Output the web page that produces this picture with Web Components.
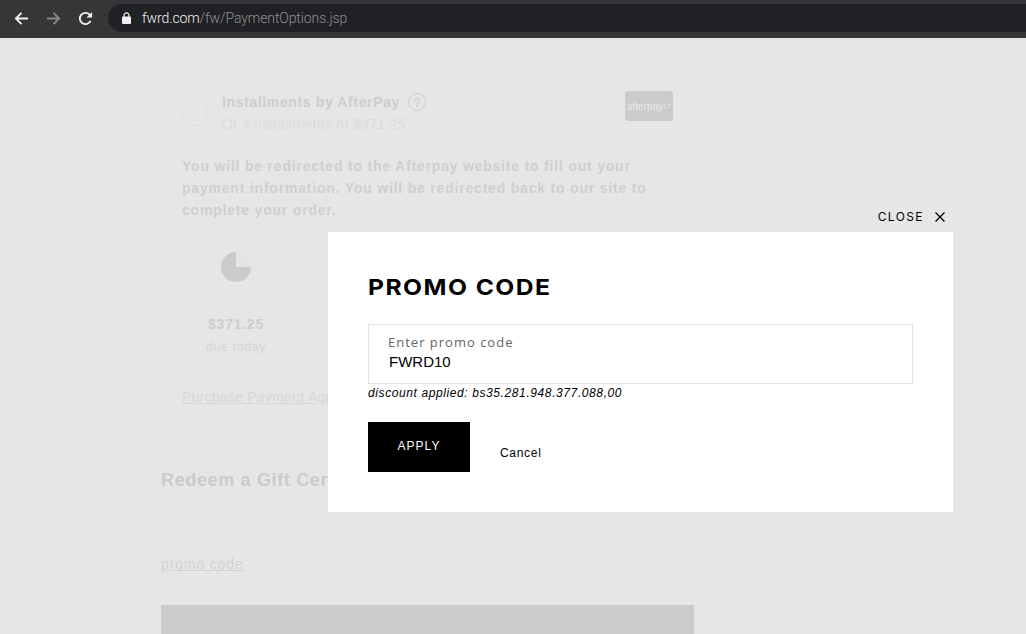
<!DOCTYPE html>
<html>
<head>
<meta charset="utf-8">
<title>Promo code</title>
<style>
  html, body { margin: 0; height: 100%; }
  body { width: 1026px; height: 634px; overflow: hidden; background: #e6e6e6; font-family: "Liberation Sans", Arial, sans-serif; }
</style>
</head>
<body>
<app-shell>
  <browser-bar slot="bar" host-name="fwrd.com" path="/fw/PaymentOptions.jsp"></browser-bar>
  <checkout-page slot="page"></checkout-page>
  <promo-dialog slot="dialog" value="FWRD10" message="discount applied: bs35.281.948.377.088,00"></promo-dialog>
</app-shell>

<script>
class AppShell extends HTMLElement {
  constructor() {
    super();
    this.attachShadow({ mode: 'open' });
  }

  connectedCallback() {
    this.shadowRoot.innerHTML = `
      <style>
        :host { display: flex; flex-direction: column; width: 1026px; height: 634px; position: relative; overflow: hidden; }
        .dialog-layer { position: absolute; left: 328px; top: 207px; }
      </style>
      <slot name="bar"></slot>
      <slot name="page"></slot>
      <div class="dialog-layer"><slot name="dialog"></slot></div>
    `;
  }
}

class BrowserBar extends HTMLElement {
  constructor() {
    super();
    this.attachShadow({ mode: 'open' });
  }

  connectedCallback() {
    this.shadowRoot.innerHTML = `
      <style>
        :host { display: flex; align-items: center; height: 38px; background: #353637; box-sizing: border-box; padding: 4px 0 6px 14px; flex: none; }
        svg { display: block; flex: none; }
        .nav { display: flex; gap: 17px; align-items: center; margin-right: 15px; }
        .url { flex: 1; height: 28px; background: #202124; border-radius: 14px 0 0 14px; display: flex; align-items: center; padding-left: 14px; font: 14px Roboto, "Liberation Sans", sans-serif; letter-spacing: -0.1px; }
        .lock { margin-right: 11px; }
        .host { color: #f1f1f1; font-weight: 300; }
        .path { color: #8f9194; font-weight: 300; }
      </style>
      <div class="nav">
        <svg width="15" height="15" viewBox="0 0 16 16" fill="none" stroke="#f1f1f1" stroke-width="2"><path d="M15 8H2M8 2 2 8l6 6"/></svg>
        <svg width="15" height="15" viewBox="0 0 16 16" fill="none" stroke="#85878a" stroke-width="2"><path d="M1 8h13M8 2l6 6-6 6"/></svg>
        <svg width="15" height="15" viewBox="0 0 16 16" fill="none" stroke="#f1f1f1" stroke-width="2"><path d="M13.4 10.5A6 6 0 1 1 12.3 3.8L14 5.5"/><path d="M15 1v6H9z" fill="#f1f1f1" stroke="none"/></svg>
      </div>
      <div class="url">
        <svg class="lock" width="9" height="12" viewBox="0 0 9 12"><path d="M2 5V3.4a2.5 2.5 0 0 1 5 0V5" fill="none" stroke="#f1f1f1" stroke-width="1.2"/><rect y="4.6" width="9" height="7.4" rx="1" fill="#f1f1f1"/></svg>
        <span class="host">${this.getAttribute('host-name')}</span><span class="path">${this.getAttribute('path')}</span>
      </div>
    `;
  }
}

class AfterpayOption extends HTMLElement {
  constructor() {
    super();
    this.attachShadow({ mode: 'open' });
  }

  connectedCallback() {
    this.shadowRoot.innerHTML = `
      <style>
        :host { display: flex; width: 491px; height: 46px; }
        .radio { width: 26px; height: 26px; box-sizing: border-box; border: 1px solid #dfdfdf; border-radius: 50%; margin: 9px 14px 0 0; flex: none; }
        .text { flex: 1; padding-top: 1px; }
        .title { display: flex; align-items: center; height: 20px; font-weight: 700; font-size: 14px; letter-spacing: 0.63px; color: #cdcdcd; }
        .help { width: 18px; height: 18px; box-sizing: border-box; border: 1.5px solid #cfcfcf; border-radius: 50%; margin-left: 8px; font-size: 13px; font-weight: 400; letter-spacing: 0; display: flex; align-items: center; justify-content: center; }
        .sub { margin-top: 2px; font-size: 14px; letter-spacing: 0.3px; color: #dcdcdc; line-height: 20px; }
        .logo { width: 48px; height: 30px; background: #cbcbcb; border-radius: 3px; display: flex; align-items: center; justify-content: center; color: #e8e8e8; font: 10px "Liberation Sans", sans-serif; flex: none; }
        svg { display: block; }
      </style>
      <div class="radio"></div>
      <div class="text">
        <div class="title">Installments by AfterPay<span class="help">?</span></div>
        <div class="sub">Or 4 installments of $371.25</div>
      </div>
      <div class="logo">afterpay<svg width="8" height="8" viewBox="0 0 9 8" fill="none" stroke="#e8e8e8"><path d="M1 4l3-3 1 1h2l1 2-3 3-1-1H2z"/></svg></div>
    `;
  }
}

class PaymentSchedule extends HTMLElement {
  constructor() {
    super();
    this.attachShadow({ mode: 'open' });
  }

  connectedCallback() {
    this.shadowRoot.innerHTML = `
      <style>
        :host { display: flex; flex-direction: column; align-items: center; width: 108px; color: #cdcdcd; }
        svg { display: block; }
        .amount { margin-top: 32px; font-weight: 700; font-size: 14px; line-height: 20px; letter-spacing: 0.75px; }
        .when { margin-top: 4px; font-size: 12px; line-height: 18px; letter-spacing: 0.8px; color: #d4d4d4; }
      </style>
      <svg width="30" height="30" viewBox="0 0 30 30"><circle cx="15" cy="15" r="15" fill="#e2e4e4"/><path d="M15 15V0A15 15 0 1 0 30 15z" fill="#cbcbcb"/></svg>
      <div class="amount">$371.25</div>
      <div class="when">due today</div>
    `;
  }
}

class CheckoutPage extends HTMLElement {
  constructor() {
    super();
    this.attachShadow({ mode: 'open' });
  }

  connectedCallback() {
    this.shadowRoot.innerHTML = `
      <style>
        :host { display: block; flex: 1; overflow: hidden; box-sizing: border-box; padding: 53px 0 0 161px; background: #e6e6e6; }
        .option { padding-left: 21px; }
        p { margin: 18px 0 0; width: 480px; font-weight: 700; font-size: 14px; line-height: 22px; letter-spacing: 0.8px; color: #cfcfcf; }
        payment-schedule { margin: 31px 0 0 0; }
        .agreement { display: block; white-space: nowrap; margin-top: 31px; font-size: 14px; line-height: 20px; letter-spacing: 0.25px; color: #d6d6d6; text-decoration: underline; }
        h2 { margin: 61px 0 0; white-space: nowrap; font-size: 18px; line-height: 24px; letter-spacing: 0.65px; color: #cbcbcb; }
        .promo { display: inline-block; margin-top: 62px; font-size: 14px; line-height: 20px; letter-spacing: 0.85px; color: #d2d2d2; text-decoration: underline; }
        .block { margin-top: 31px; width: 533px; height: 60px; background: #cbcbcb; }
      </style>
      <div class="option">
        <afterpay-option></afterpay-option>
        <p>You will be redirected to the Afterpay website to fill out your payment information. You will be redirected back to our site to complete your order.</p>
        <payment-schedule></payment-schedule>
        <a class="agreement">Purchase Payment Agreement</a>
      </div>
      <h2>Redeem a Gift Certificate</h2>
      <a class="promo">promo code</a>
      <div class="block"></div>
    `;
  }
}

class PromoDialog extends HTMLElement {
  constructor() {
    super();
    this.attachShadow({ mode: 'open' });
  }

  connectedCallback() {
    this.shadowRoot.innerHTML = `
      <style>
        :host { display: block; width: 625px; }
        .close { display: flex; justify-content: flex-end; align-items: center; height: 25px; gap: 11px; font: 12px Inter, "Liberation Sans", sans-serif; letter-spacing: 1.4px; color: #000; box-sizing: border-box; }
        .close span { line-height: 16px; margin-top: -6px; }
        .close svg { display: block; margin: -6px 8px 0 0; }
        .box { background: #fff; height: 280px; box-sizing: border-box; padding: 41px 40px 0; }
        h1 { margin: 0; font: 700 22px/28px Inter, "Liberation Sans", sans-serif; letter-spacing: 1.3px; color: #000; transform: scaleX(1.12); transform-origin: left center; white-space: nowrap; }
        .field { margin-top: 23px; height: 60px; box-sizing: border-box; border: 1px solid #e2e2e2; padding: 9px 19px 0; }
        .label { font: 13px/16px "Open Sans", "Liberation Sans", sans-serif; letter-spacing: 1px; color: #666; }
        .value { font: 15px/20px "Liberation Sans", sans-serif; color: #000; margin: 2px 0 0 1px; }
        .message { font: italic 12px/18px "Liberation Sans", sans-serif; letter-spacing: 0.6px; color: #000; }
        .actions { display: flex; align-items: center; margin-top: 20px; }
        .apply { width: 102px; height: 50px; background: #000; color: #fff; display: flex; align-items: center; justify-content: center; font: 12px/14px "Liberation Sans", sans-serif; letter-spacing: 1px; padding-bottom: 2px; box-sizing: border-box; }
        .cancel { margin: 12px 0 0 30px; font: 12px/16px "Liberation Sans", sans-serif; letter-spacing: 0.7px; color: #000; }
      </style>
      <div class="close">
        <span>CLOSE</span>
        <svg width="10" height="10" viewBox="0 0 10 10" fill="none" stroke="#000" stroke-width="1.3"><path d="M.5.5l9 9M9.5.5l-9 9"/></svg>
      </div>
      <div class="box">
        <h1>PROMO CODE</h1>
        <div class="field">
          <div class="label">Enter promo code</div>
          <div class="value">${this.getAttribute('value')}</div>
        </div>
        <div class="message">${this.getAttribute('message')}</div>
        <div class="actions">
          <div class="apply">APPLY</div>
          <div class="cancel">Cancel</div>
        </div>
      </div>
    `;
  }
}

customElements.define('app-shell', AppShell);
customElements.define('browser-bar', BrowserBar);
customElements.define('afterpay-option', AfterpayOption);
customElements.define('payment-schedule', PaymentSchedule);
customElements.define('checkout-page', CheckoutPage);
customElements.define('promo-dialog', PromoDialog);
</script>
</body>
</html>
